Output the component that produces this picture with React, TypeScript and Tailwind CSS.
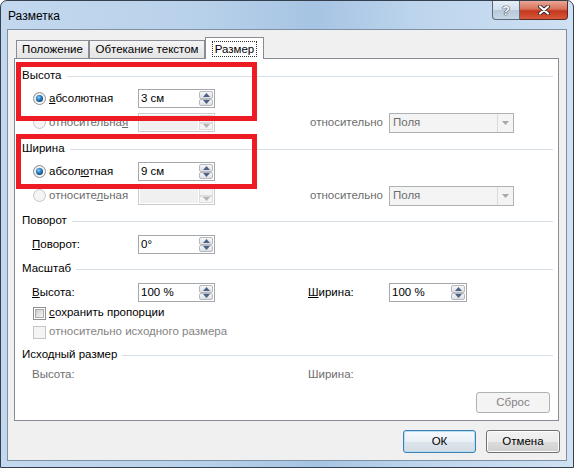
import type { ReactNode } from 'react'

function Radio({ checked = false, disabled = false }: { checked?: boolean; disabled?: boolean }) {
  return (
    <svg width="13" height="13" viewBox="0 0 13 13" className="shrink-0">
      <defs>
        <linearGradient id="radioFill" x1="0" y1="0" x2="1" y2="1">
          <stop offset="0" stopColor="#d5d5d5" />
          <stop offset="1" stopColor="#ffffff" />
        </linearGradient>
        <radialGradient id="radioDot" cx="0.4" cy="0.35" r="0.7">
          <stop offset="0" stopColor="#8fd4fa" />
          <stop offset="0.45" stopColor="#2b86cc" />
          <stop offset="1" stopColor="#0f3f6e" />
        </radialGradient>
      </defs>
      <circle cx="6.5" cy="6.5" r="6" fill={disabled ? '#f4f4f4' : 'url(#radioFill)'} stroke={disabled ? '#c5c5c5' : '#8e8f8f'} />
      {!disabled && <circle cx="6.5" cy="6.5" r="4.5" fill="none" stroke="#f6f6f6" strokeWidth="1" />}
      {checked && <circle cx="6.5" cy="6.5" r="3.5" fill="url(#radioDot)" />}
    </svg>
  )
}

function Checkbox({ disabled = false }: { disabled?: boolean }) {
  return (
    <div
      className={`flex h-[13px] w-[13px] shrink-0 items-center justify-center border ${
        disabled ? 'border-[#c5c5c5] bg-[#f4f4f4]' : 'border-[#8e8f8f] bg-white'
      }`}
    >
      {!disabled && <div className="h-[9px] w-[9px] border border-[#ababab] bg-[linear-gradient(135deg,#cbcbcb,#f7f7f7)]" />}
    </div>
  )
}

function SpinArrow({ up }: { up: boolean }) {
  return (
    <div className="flex h-[8px] items-center justify-center rounded-[2px] border border-[#b6babf] bg-[linear-gradient(#f7f7f7,#dcdfe3)]">
      <svg width="7" height="4" viewBox="0 0 7 4">
        <path d={up ? 'M0 4 L3.5 0 L7 4 Z' : 'M0 0 L3.5 4 L7 0 Z'} fill="#4d6185" />
      </svg>
    </div>
  )
}

function Spinner({ value = '', disabled = false, width = 'w-[77px]' }: { value?: string; disabled?: boolean; width?: string }) {
  return (
    <div
      className={`flex h-[19px] ${width} shrink-0 items-stretch border ${
        disabled ? 'border-[#c9cbcf] bg-white' : 'border-[#a4a7ab] bg-white'
      }`}
    >
      <div className={`flex flex-1 items-center pl-[2px] ${disabled ? 'm-[1px] bg-[#f0f0f0]' : ''}`}>{value}</div>
      <div className="flex w-[15px] flex-col justify-center py-px pr-px">
        {disabled ? (
          <>
            <div className="h-[8px] border border-[#dcdcdc] bg-[#f4f4f4]" />
            <div className="flex h-[8px] items-center justify-center border border-[#dcdcdc] bg-[#f4f4f4]">
              <svg width="7" height="4" viewBox="0 0 7 4">
                <path d="M0 0 L3.5 4 L7 0 Z" fill="#b4b4b4" />
              </svg>
            </div>
          </>
        ) : (
          <>
            <SpinArrow up />
            <SpinArrow up={false} />
          </>
        )}
      </div>
    </div>
  )
}

function Dropdown() {
  return (
    <div className="flex h-[20px] w-[125px] shrink-0 items-stretch border border-[#adb2b5] bg-[#f4f4f4]">
      <div className="flex flex-1 items-center pl-[3px] text-[#6d6d6d]">Поля</div>
      <div className="flex w-[16px] items-center justify-center border-l border-[#dadada]">
        <svg width="7" height="4" viewBox="0 0 7 4">
          <path d="M0 0 L3.5 4 L7 0 Z" fill="#a8a8a8" />
        </svg>
      </div>
    </div>
  )
}

function SectionHeader({ title, className = '' }: { title: string; className?: string }) {
  return (
    <div className={`flex h-[18px] items-center pl-[7px] pr-[5px] ${className}`}>
      <span>{title}</span>
      <div className="ml-[5px] h-px flex-1 bg-[#d5dfe5]" />
    </div>
  )
}

function WinButton({ children, primary = false, disabled = false, className = '' }: { children: ReactNode; primary?: boolean; disabled?: boolean; className?: string }) {
  const look = disabled
    ? 'border-[#adb2b5] bg-[#f4f4f4] text-[#838383]'
    : primary
      ? 'border-[#3c7fb1] bg-[linear-gradient(#f4f9fc_0%,#e9f0f5_50%,#dde5eb_50%,#d2dce3_100%)] shadow-[inset_0_0_0_1px_#b5def5]'
      : 'border-[#707070] bg-[linear-gradient(#f2f2f2_0%,#ebebeb_50%,#dddddd_50%,#cfcfcf_100%)] shadow-[inset_0_0_0_1px_#fcfcfc]'
  return (
    <div className={`flex items-center justify-center rounded-[3px] border ${look} ${className}`}>{children}</div>
  )
}

function Tab({ label, selected = false, width }: { label: string; selected?: boolean; width: string }) {
  if (selected) {
    return (
      <div className={`relative z-10 -mb-px flex h-[22px] ${width} items-start justify-center border border-b-0 border-[#898c95] bg-white pt-[3px]`}>
        <span className="border border-dotted border-[#333] px-[2px] leading-[14px]">{label}</span>
      </div>
    )
  }
  return (
    <div className={`flex h-[18px] ${width} items-center justify-center border border-b-0 border-[#898c95] bg-[linear-gradient(#f4f4f4,#e4e4e4)] pt-px`}>
      {label}
    </div>
  )
}

export default function App() {
  return (
    <div className="relative flex h-[468px] w-[574px] flex-col overflow-hidden rounded-t-[7px] border border-[#34404e] bg-[linear-gradient(90deg,#c3d8ee_0%,#b8d1ea_35%,#a6c4e3_55%,#bcd4ec_72%,#cfe1f3_100%)] font-['Liberation_Sans',Arial,sans-serif] text-[11.5px] text-black">
      {/* Title bar */}
      <div className="flex h-[28px] items-start">
        <div className="pl-[7px] pt-[7px] text-[12px] leading-[16px]">Разметка</div>
        <div className="ml-auto mr-[5px] flex">
          <div className="flex h-[19px] w-[28px] items-center justify-center rounded-bl-[4px] border border-t-0 border-[#5b6a7a] bg-[linear-gradient(#e6eef6_0%,#d2dfec_50%,#b7c8d9_50%,#c9d7e5_100%)]">
            <span className="text-[13px] font-bold leading-none text-white [text-shadow:0_0_1px_#2d3a48,0_0_1px_#2d3a48,0_0_1px_#2d3a48]">?</span>
          </div>
          <div className="flex h-[19px] w-[48px] items-center justify-center rounded-br-[4px] border border-l-0 border-t-0 border-[#5b2a22] bg-[linear-gradient(#e9a796_0%,#d8715a_45%,#c3361e_55%,#d8583c_100%)]">
            <svg width="12" height="10" viewBox="0 0 12 10">
              <path d="M2 1.5 L10 8.5 M10 1.5 L2 8.5" stroke="#3b2a28" strokeWidth="4" strokeLinecap="round" />
              <path d="M2 1.5 L10 8.5 M10 1.5 L2 8.5" stroke="#ffffff" strokeWidth="2.2" strokeLinecap="round" />
            </svg>
          </div>
        </div>
      </div>

      {/* Client area */}
      <div className="ml-[6px] flex h-[432px] w-[560px] flex-col border border-[#7e90a4] bg-[#f0f0f0] px-[6px] pt-[7px]">
        <div className="ml-[2px] flex h-[21px] items-end">
          <Tab label="Положение" width="w-[73px]" />
          <Tab label="Обтекание текстом" width="w-[116px]" />
          <Tab label="Размер" width="w-[59px]" selected />
        </div>

        <div className="flex h-[363px] w-[545px] flex-col border border-[#898c95] bg-white">
          <SectionHeader title="Высота" className="mt-[8px]" />
          <div className="mt-[4px] flex h-[19px] items-center pl-[18px]">
            <div className="flex w-[105px] items-center gap-[3px]">
              <Radio checked />
              <span><u>а</u>бсолютная</span>
            </div>
            <Spinner value="3 см" />
          </div>
          <div className="mt-[5px] flex h-[19px] items-center pl-[18px]">
            <div className="flex w-[105px] items-center gap-[3px] text-[#6d6d6d]">
              <Radio disabled />
              <span>относительна<u>я</u></span>
            </div>
            <Spinner disabled />
            <span className="ml-[95px] w-[79px] text-[#6d6d6d]">относительно</span>
            <Dropdown />
          </div>

          <SectionHeader title="Ширина" className="mt-[8px]" />
          <div className="mt-[4px] flex h-[19px] items-center pl-[18px]">
            <div className="flex w-[105px] items-center gap-[3px]">
              <Radio checked />
              <span>абсол<u>ю</u>тная</span>
            </div>
            <Spinner value="9 см" />
          </div>
          <div className="mt-[5px] flex h-[19px] items-center pl-[18px]">
            <div className="flex w-[105px] items-center gap-[3px] text-[#6d6d6d]">
              <Radio disabled />
              <span>относите<u>л</u>ьная</span>
            </div>
            <Spinner disabled />
            <span className="ml-[95px] w-[79px] text-[#6d6d6d]">относительно</span>
            <Dropdown />
          </div>

          <SectionHeader title="Поворот" className="mt-[7px]" />
          <div className="mt-[5px] flex h-[19px] items-center pl-[17px]">
            <span className="w-[106px]"><u>П</u>оворот:</span>
            <Spinner value="0°" />
          </div>

          <SectionHeader title="Масштаб" className="mt-[6px]" />
          <div className="mt-[5px] flex h-[19px] items-center pl-[17px]">
            <span className="w-[106px]"><u>В</u>ысота:</span>
            <Spinner value="100 %" />
            <span className="ml-[93px] w-[81px]"><u>Ш</u>ирина:</span>
            <Spinner value="100 %" width="w-[78px]" />
          </div>
          <div className="mt-[3px] flex h-[16px] items-center gap-[3px] pl-[18px]">
            <Checkbox />
            <span><u>с</u>охранить пропорции</span>
          </div>
          <div className="mt-[3px] flex h-[16px] items-center gap-[3px] pl-[18px] text-[#838383]">
            <Checkbox disabled />
            <span>относительно исходного размера</span>
          </div>

          <SectionHeader title="Исходный размер" className="mt-[6px]" />
          <div className="mt-[3px] flex h-[16px] items-center pl-[17px] text-[#6d6d6d]">
            <span className="w-[276px]">Высота:</span>
            <span>Ширина:</span>
          </div>
          <div className="mt-[9px] flex justify-end pr-[8px]">
            <WinButton disabled className="h-[21px] w-[74px]">Сброс</WinButton>
          </div>
        </div>

        <div className="mt-[9px] flex justify-end gap-[10px]">
          <WinButton primary className="h-[23px] w-[73px]">ОК</WinButton>
          <WinButton className="h-[23px] w-[74px]">Отмена</WinButton>
        </div>
      </div>

      {/* Red highlight frames drawn over the dialog */}
      <div className="absolute left-[15px] top-[61px] h-[59px] w-[241px] border-[5px] border-[#ed1c24]" />
      <div className="absolute left-[15px] top-[133px] h-[55px] w-[241px] border-[5px] border-[#ed1c24]" />
    </div>
  )
}
